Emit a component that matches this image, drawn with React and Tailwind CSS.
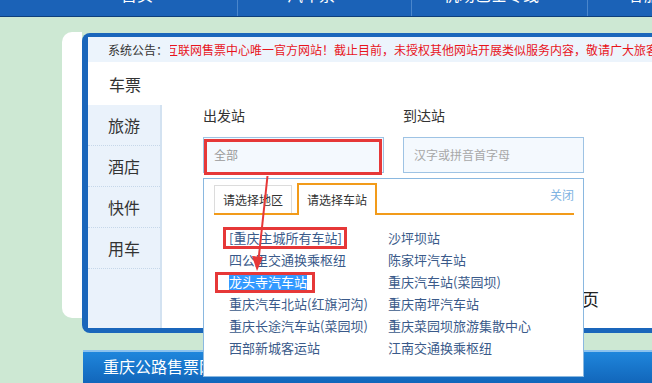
export default function App() {
  const left = [
    "[重庆主城所有车站]",
    "四公里交通换乘枢纽",
    "龙头寺汽车站",
    "重庆汽车北站(红旗河沟)",
    "重庆长途汽车站(菜园坝)",
    "西部新城客运站",
  ];
  const right = [
    "沙坪坝站",
    "陈家坪汽车站",
    "重庆汽车站(菜园坝)",
    "重庆南坪汽车站",
    "重庆菜园坝旅游集散中心",
    "江南交通换乘枢纽",
  ];
  const rows = left.map((l, i) => [l, right[i]]);

  return (
    <div className="relative w-[652px] h-[383px] overflow-hidden bg-[#cde8d3] font-['Noto_Sans_CJK_SC','Noto_Sans',sans-serif]">
      {/* top navigation */}
      <div className="h-[17px] bg-[#1b62b7] border-b border-[#0e3f7c] flex overflow-hidden text-white text-[16px]">
        <div className="w-[64px] shrink-0" />
        <div className="w-[174px] shrink-0 h-full border-r border-[#4a86cc] pl-[57px]">
          <div className="-mt-[14px] leading-[16px] whitespace-nowrap">首页</div>
        </div>
        <div className="w-[174px] shrink-0 h-full border-r border-[#4a86cc] pl-[49px]">
          <div className="-mt-[14px] leading-[16px] whitespace-nowrap">汽车票</div>
        </div>
        <div className="w-[176px] shrink-0 h-full border-r border-[#4a86cc] pl-[31px]">
          <div className="-mt-[14px] leading-[16px] whitespace-nowrap">机场巴士专线</div>
        </div>
        <div className="w-[174px] shrink-0 h-full pl-[40px]">
          <div className="-mt-[14px] leading-[16px] whitespace-nowrap">客服中心</div>
        </div>
      </div>

      {/* card + panel */}
      <div className="flex pl-[62px] pt-[15px]">
        <div className="w-[20px] h-[286px] shrink-0 bg-white rounded-l-[10px]" />
        <div className="mt-[1px] w-[600px] shrink-0 bg-white border-l-[6px] border-t-[4px] border-b-[5px] border-[#1a66bb] rounded-tl-[8px] rounded-bl-[8px]">
          {/* notice */}
          <div className="h-[25px] bg-[#ecf4fc] flex items-center pl-[20px] text-[12px] whitespace-nowrap">
            <span className="text-[#333]">系统公告：</span>
            <div className="ml-[2px] overflow-hidden">
              <div className="-ml-[4px] text-[#e8141c]">
                互联网售票中心唯一官方网站！截止目前，未授权其他网站开展类似服务内容，敬请广大旅客注意
              </div>
            </div>
          </div>

          {/* body */}
          <div className="flex h-[266px]">
            <div className="w-[74px] shrink-0 flex flex-col text-[16px] text-[#333]">
              <div className="h-[43px] bg-white flex items-center justify-center">车票</div>
              <div className="flex-1 bg-[#eaf2fb] border-r-[2px] border-[#d3e2f1]">
                {["旅游", "酒店", "快件", "用车"].map((t) => (
                  <div
                    key={t}
                    className="h-[41px] flex items-center justify-center border-b border-dotted border-[#c6d7e9]"
                  >
                    {t}
                  </div>
                ))}
              </div>
            </div>

            <div className="flex-1 pl-[41px] pt-[43px]">
              <div className="flex gap-[19px]">
                {/* departure */}
                <div className="relative w-[181px]">
                  <div className="text-[14px] leading-[20px] text-[#333]">出发站</div>
                  <div className="mt-[12px] h-[36px] border border-[#9ec3e4] bg-[#f4f9fe] pl-[10px] flex items-center text-[12px] text-[#9a9a9a]">
                    全部
                  </div>
                  <div className="absolute left-[1px] top-[34px] w-[178px] h-[36px] border-[3px] border-[#e63838]" />

                  {/* dropdown */}
                  <div className="absolute z-10 left-0 top-[73px] w-[381px] h-[199px] bg-white border border-[#8ab8e0]">
                    <div className="relative">
                      <div className="ml-[10px] mr-[9px] h-[36px] flex items-end border-b-2 border-[#f29b1a] text-[12px] text-[#333]">
                        <div className="w-[78px] h-[28px] border border-b-0 border-[#dcdcdc] bg-white flex items-center justify-center">
                          请选择地区
                        </div>
                        <div className="ml-[5px] w-[80px] h-[32px] -mb-[2px] border-2 border-b-0 border-[#f29b1a] bg-white flex items-center justify-center">
                          请选择车站
                        </div>
                        <div className="ml-auto self-start mt-[8px] leading-[16px] text-[#7eb3e2]">关闭</div>
                      </div>

                      <div className="pt-[12px] pl-[25px] grid grid-cols-[159px_1fr] text-[13px] leading-[22px] text-[#3a5a8a] whitespace-nowrap">
                        {rows.flatMap(([l, r], i) => [
                          <div key={"l" + i}>
                            {i === 2 ? <span className="bg-[#3399ff] text-white">{l}</span> : l}
                          </div>,
                          <div key={"r" + i}>{r}</div>,
                        ])}
                      </div>

                      <div className="absolute left-[19px] top-[48px] w-[124px] h-[22px] border-[3px] border-[#e63838]" />
                      <div className="absolute left-[11px] top-[93px] w-[100px] h-[21px] border-[3px] border-[#e63838]" />
                    </div>
                  </div>
                </div>

                {/* arrival */}
                <div className="w-[181px]">
                  <div className="text-[14px] leading-[20px] text-[#333]">到达站</div>
                  <div className="mt-[12px] h-[36px] border border-[#9ec3e4] bg-[#f4f9fe] pl-[10px] flex items-center text-[12px] text-[#a8a8a8]">
                    汉字或拼音首字母
                  </div>
                </div>
              </div>

              <div className="mt-[116px] w-[396px] text-right text-[17px] leading-[20px] text-[#222] whitespace-nowrap">
                点击查看首页
              </div>
            </div>
          </div>
        </div>
      </div>

      {/* bottom bar */}
      <div className="mt-[17px] ml-[83px] h-[40px] border-t-2 border-[#8cc2ee] bg-gradient-to-b from-[#1f86dc] to-[#0f5fb3] pl-[20px] pt-[2px] text-[16px] leading-[24px] text-white whitespace-nowrap">
        重庆公路售票网公告
      </div>

      {/* annotation arrow */}
      <svg className="absolute left-0 top-0 z-20 pointer-events-none" width="652" height="383">
        <line x1="267.5" y1="176" x2="258.5" y2="260" stroke="#e63838" strokeWidth="2" />
        <polygon points="257,271 252,256 263,257" fill="#e63838" />
      </svg>
    </div>
  );
}
